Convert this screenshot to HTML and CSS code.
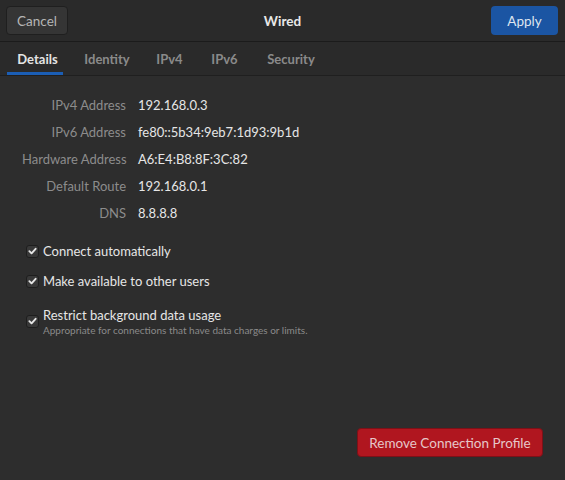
FILE: index.html
```html
<!DOCTYPE html>
<html>
<head>
<meta charset="utf-8">
<link rel="stylesheet" href="styles.css">
</head>
<body>
<div class="window">
  <header class="headerbar">
    <button class="btn btn-cancel">Cancel</button>
    <div class="title">Wired</div>
    <button class="btn btn-apply">Apply</button>
  </header>
  <nav class="tabs">
    <div class="tab active">Details</div>
    <div class="tab">Identity</div>
    <div class="tab">IPv4</div>
    <div class="tab">IPv6</div>
    <div class="tab">Security</div>
  </nav>
  <main class="content">
    <div class="info">
      <div class="label">IPv4 Address</div><div class="value">192.168.0.3</div>
      <div class="label">IPv6 Address</div><div class="value">fe80::5b34:9eb7:1d93:9b1d</div>
      <div class="label">Hardware Address</div><div class="value">A6:E4:B8:8F:3C:82</div>
      <div class="label">Default Route</div><div class="value">192.168.0.1</div>
      <div class="label">DNS</div><div class="value">8.8.8.8</div>
    </div>
    <div class="checks">
      <div class="check">
        <span class="box"><svg viewBox="0 0 14 14" width="14" height="14"><path d="M3 7.2 L5.8 10 L11 4.2" fill="none" stroke="#e6e6e6" stroke-width="2.4" stroke-linecap="round" stroke-linejoin="round"/></svg></span>
        <div class="check-text"><div class="check-label">Connect automatically</div></div>
      </div>
      <div class="check">
        <span class="box"><svg viewBox="0 0 14 14" width="14" height="14"><path d="M3 7.2 L5.8 10 L11 4.2" fill="none" stroke="#e6e6e6" stroke-width="2.4" stroke-linecap="round" stroke-linejoin="round"/></svg></span>
        <div class="check-text"><div class="check-label">Make available to other users</div></div>
      </div>
      <div class="check multi">
        <span class="box"><svg viewBox="0 0 14 14" width="14" height="14"><path d="M3 7.2 L5.8 10 L11 4.2" fill="none" stroke="#e6e6e6" stroke-width="2.4" stroke-linecap="round" stroke-linejoin="round"/></svg></span>
        <div class="check-text">
          <div class="check-label">Restrict background data usage</div>
          <div class="check-sub">Appropriate for connections that have data charges or limits.</div>
        </div>
      </div>
    </div>
    <div class="spacer"></div>
    <div class="footer">
      <button class="btn btn-remove">Remove Connection Profile</button>
    </div>
  </main>
</div>
</body>
</html>
```
FILE: styles.css
```css
* { box-sizing: border-box; }
html, body { margin: 0; padding: 0; }
body {
  width: 565px;
  height: 480px;
  background: #2d2d2d;
  font-family: "Lato", "Noto Sans", sans-serif;
  font-size: 13px;
  color: #eeeeec;
  overflow: hidden;
}
.window {
  display: flex;
  flex-direction: column;
  height: 480px;
}
.headerbar {
  height: 42px;
  background: #2a2a2a;
  border-bottom: 1px solid #1b1b1b;
  display: flex;
  align-items: center;
  justify-content: space-between;
  padding: 0 7px 0 6px;
  position: relative;
}
.btn {
  font-family: inherit;
  font-size: 13.5px;
  border: none;
  border-radius: 4px;
  height: 29px;
  padding: 0;
  cursor: default;
}
.btn-cancel {
  background: #353535;
  color: #b5b5b5;
  width: 62px;
  border: 1px solid #1f1f1f;
}
.btn-apply {
  background: #1b55a3;
  color: #dfe6f0;
  width: 67px;
}
.title {
  position: absolute;
  left: 0; right: 0;
  text-align: center;
  font-weight: bold;
  font-size: 13.5px;
  color: #e8e8e8;
  pointer-events: none;
}
.tabs {
  height: 34px;
  background: #2a2a2a;
  border-bottom: 1px solid #1f1f1f;
  display: flex;
  padding-left: 7px;
}
.tab {
  position: relative;
  display: flex;
  align-items: center;
  justify-content: center;
  color: #8a8a8a;
  font-weight: bold;
  font-size: 13px;
  padding-bottom: 0;
}
.tab:nth-child(1) { width: 61px; }
.tab:nth-child(2) { width: 78px; }
.tab:nth-child(3) { width: 47px; }
.tab:nth-child(4) { width: 63px; }
.tab:nth-child(5) { width: 70px; }
.tab.active {
  color: #e4e4e4;
}
.tab.active::after {
  content: "";
  position: absolute;
  left: 0;
  bottom: 0;
  width: 56px;
  height: 3px;
  background: #1b5eb5;
}
.content {
  flex: 1;
  display: flex;
  flex-direction: column;
  padding: 20px 22px 22px 22px;
}
.info {
  display: grid;
  grid-template-columns: 104px auto;
  column-gap: 12px;
  row-gap: 9px;
  line-height: 18px;
}
.label {
  text-align: right;
  color: #8c8c8c;
  white-space: nowrap;
}
.value {
  color: #e6e6e6;
  white-space: nowrap;
}
.checks {
  margin-top: 20px;
  display: flex;
  flex-direction: column;
  gap: 12px;
  padding-left: 4px;
}
.check {
  display: flex;
  align-items: center;
  gap: 4px;
}
.check.multi { margin-top: 4px; }
.box {
  width: 13px;
  height: 13px;
  border-radius: 3px;
  background: #383838;
  border: 1px solid #1e1e1e;
  display: flex;
  align-items: center;
  justify-content: center;
  flex: none;
}
.box svg { display: block; width: 12px; height: 12px; }
.check-label {
  color: #e6e6e6;
  line-height: 18px;
}
.check-sub {
  color: #8a8a8a;
  font-size: 10px;
  line-height: 12px;
}
.spacer { flex: 1; }
.footer {
  display: flex;
  justify-content: flex-end;
}
.btn-remove {
  background: #b0161f;
  color: #e6c7c9;
  height: 29px;
  width: 186px;
  border: 1px solid #7e1017;
  margin-bottom: 1px;
}
```
